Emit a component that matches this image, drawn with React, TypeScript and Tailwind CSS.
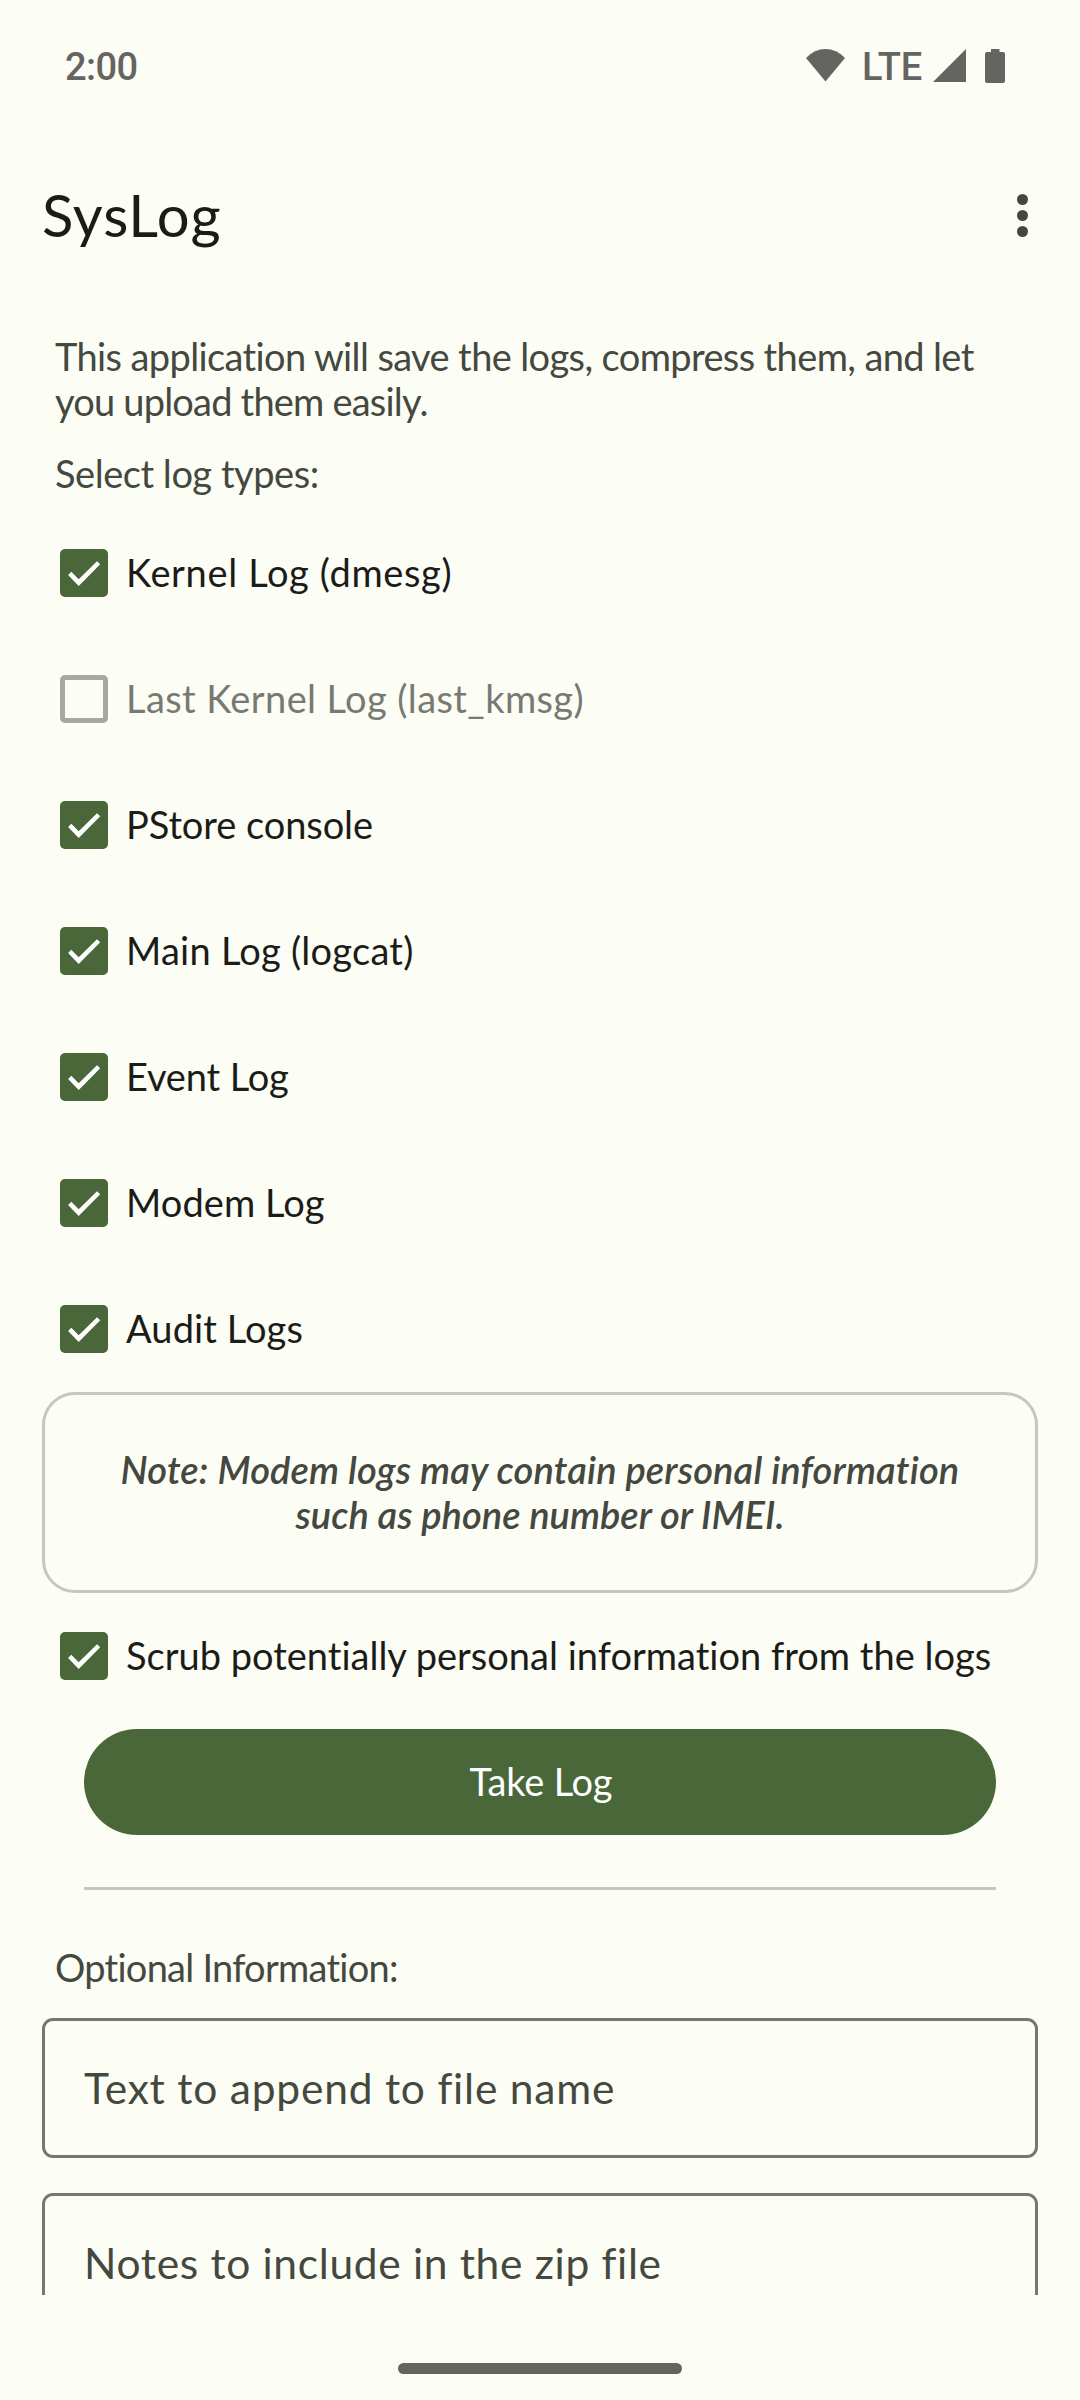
import { useState } from 'react';

type LogType = { label: string; tracking: string; checked: boolean; disabled?: boolean };

const LOG_TYPES: LogType[] = [
  { label: 'Kernel Log (dmesg)', tracking: 'tracking-[0.65px]', checked: true },
  { label: 'Last Kernel Log (last_kmsg)', tracking: 'tracking-[0.4px]', checked: false, disabled: true },
  { label: 'PStore console', tracking: 'tracking-[-0.08px]', checked: true },
  { label: 'Main Log (logcat)', tracking: 'tracking-[0.25px]', checked: true },
  { label: 'Event Log', tracking: 'tracking-[-0.14px]', checked: true },
  { label: 'Modem Log', tracking: 'tracking-[0.09px]', checked: true },
  { label: 'Audit Logs', tracking: 'tracking-[0.1px]', checked: true },
];

function StatusBar() {
  return (
    <div className="flex h-[130px] shrink-0 items-start justify-between pt-[46px] pr-[75px] pl-[65px] font-['Roboto',sans-serif] text-[38px] leading-[42px] font-medium text-[#646461]">
      <span className="tracking-[-0.6px]">2:00</span>
      <div className="flex items-start">
        <svg className="mt-[3px] h-[33px] w-[39px]" viewBox="0 0 39 33" fill="currentColor">
          <path d="M0 9Q8.5 0 19.5 0T39 9L19.5 32.6Z" />
        </svg>
        <span className="ml-[17px] w-[71px] tracking-[-0.2px]">LTE</span>
        <svg className="mt-[3px] h-[33px] w-[33px]" viewBox="0 0 33 33" fill="currentColor">
          <path d="M33 0V33H0Z" />
        </svg>
        <svg className="mt-[3px] ml-[19px] h-[34px] w-[20px]" viewBox="0 0 20 34" fill="currentColor">
          <path d="M6 0h8.5v3H18a2 2 0 0 1 2 2v27a2 2 0 0 1-2 2H2a2 2 0 0 1-2-2V5a2 2 0 0 1 2-2h4Z" />
        </svg>
      </div>
    </div>
  );
}

function CheckRow({ label, tracking, checked, disabled, onToggle }: LogType & { onToggle: () => void }) {
  return (
    <button
      type="button"
      role="checkbox"
      aria-checked={checked}
      disabled={disabled}
      onClick={onToggle}
      className="flex h-12 items-start gap-[18px] pl-[18px] text-left text-[#1b1c18] disabled:text-[#777972]"
    >
      {checked ? (
        <svg className="size-12 shrink-0 rounded-[5px] bg-[#4a673a]" viewBox="0 0 48 48" fill="#ffffff">
          <path d="M8.1 26L11.3 22.8L18.7 30.3L37 12.2L40.2 15.3L18.7 37Z" />
        </svg>
      ) : (
        <span className="size-12 shrink-0 rounded-[5px] border-[5px] border-[#a7a9a0]" />
      )}
      <span className={`pt-px whitespace-nowrap ${tracking}`}>{label}</span>
    </button>
  );
}

function Field({ label, tracking }: { label: string; tracking: string }) {
  return (
    <div className="flex h-[140px] shrink-0 items-center rounded-[11px] border-[3px] border-[#74796d] pb-[2px] pl-[39px] text-[42.5px] text-[#44483f]">
      <span className={tracking}>{label}</span>
    </div>
  );
}

export default function App() {
  const [logs, setLogs] = useState(LOG_TYPES);
  const [scrub, setScrub] = useState(true);
  const toggle = (index: number) =>
    setLogs(logs.map((log, i) => (i === index ? { ...log, checked: !log.checked } : log)));

  return (
    <div className="flex h-[2400px] w-[1080px] flex-col overflow-hidden bg-[#fcfdf5] font-['Lato',sans-serif] text-[38px] leading-[45px] text-[#44483f]">
      <StatusBar />

      <header className="flex h-[170px] shrink-0 items-start justify-between pt-[54px] pr-[52px] pl-[42px]">
        <h1 className="pt-px text-[58px] leading-[60px] tracking-[0.9px] text-[#1b1c18]">SysLog</h1>
        <button type="button" aria-label="More options" className="mt-[10px] flex flex-col gap-[5px]">
          <span className="size-[11px] rounded-full bg-current" />
          <span className="size-[11px] rounded-full bg-current" />
          <span className="size-[11px] rounded-full bg-current" />
        </button>
      </header>

      <main className="flex h-[1995px] shrink-0 flex-col overflow-hidden px-[42px] pt-[34px]">
        <p className="pl-[13px] whitespace-nowrap">
          <span className="block tracking-[-0.62px]">This application will save the logs, compress them, and let</span>
          <span className="block tracking-[-0.8px]">you upload them easily.</span>
        </p>
        <p className="mt-[27px] pl-[13px] tracking-[-0.46px]">Select log types:</p>

        <div className="mt-[53px] flex flex-col gap-[78px]">
          {logs.map((log, i) => (
            <CheckRow key={log.label} {...log} onToggle={() => toggle(i)} />
          ))}
        </div>

        <div className="mt-[39px] h-[201px] shrink-0 rounded-[33px] border-[3px] border-[#c5c8bc] pt-[52px] text-center font-semibold whitespace-nowrap italic">
          <span className="block tracking-[0.155px]">Note: Modem logs may contain personal information</span>
          <span className="block tracking-[0.04px]">such as phone number or IMEI.</span>
        </div>

        <div className="mt-[39px] flex flex-col">
          <CheckRow
            label="Scrub potentially personal information from the logs"
            tracking="tracking-[0.005px]"
            checked={scrub}
            onToggle={() => setScrub(!scrub)}
          />
        </div>

        <button
          type="button"
          className="mx-[42px] mt-[49px] flex h-[106px] shrink-0 items-center justify-center rounded-full bg-[#4a673a] pb-px pl-[2px] tracking-[-0.19px] text-white"
        >
          Take Log
        </button>

        <hr className="mx-[42px] mt-[52px] h-[3px] shrink-0 border-0 bg-[#c5c8bc]" />

        <p className="mt-[55px] pl-[13px] tracking-[-0.75px]">Optional Information:</p>
        <div className="mt-[28px] flex flex-col gap-[35px]">
          <Field label="Text to append to file name" tracking="tracking-[0.79px]" />
          <Field label="Notes to include in the zip file" tracking="tracking-[0.67px]" />
        </div>
      </main>

      <div className="flex h-[105px] shrink-0 justify-center pt-[68px]">
        <div className="h-[11px] w-[284px] rounded-full bg-[#646461]" />
      </div>
    </div>
  );
}
